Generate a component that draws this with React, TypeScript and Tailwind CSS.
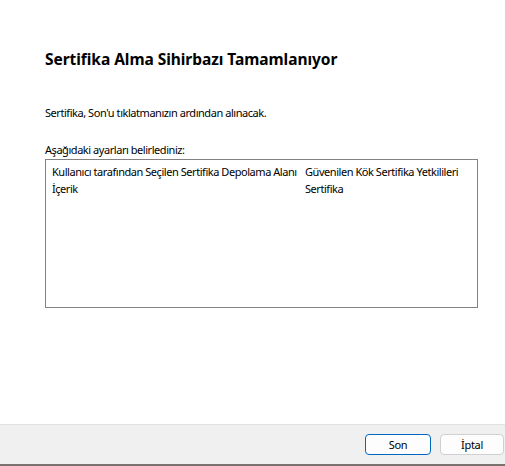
import React from "react";

export default function App() {
  const ui = { fontFamily: '"Noto Sans", "DejaVu Sans", sans-serif' };
  return (
    <div className="w-[505px] h-[466px] bg-white flex flex-col overflow-hidden text-black" style={ui}>
      <div className="flex-1 flex flex-col pl-[45px] pr-[27px]">
        <div className="mt-[47px] h-[24px] text-[15.5px] font-bold leading-[24px] tracking-[-0.05px]">
          Sertifika Alma Sihirbazı Tamamlanıyor
        </div>
        <div className="mt-[33px] h-[18px] text-[11px] leading-[18px] tracking-[-0.45px]">
          Sertifika, Son'u tıklatmanızın ardından alınacak.
        </div>
        <div className="mt-[19px] h-[18px] text-[11px] leading-[18px] tracking-[-0.45px]">
          Aşağıdaki ayarları belirlediniz:
        </div>
        <div className="mt-[0px] h-[149px] border border-[#828282] pl-[6px] pt-[3px] text-[11px] leading-[17px] tracking-[-0.45px]">
          <div className="grid grid-cols-[253px_1fr]">
            <div className="whitespace-nowrap">Kullanıcı tarafından Seçilen Sertifika Depolama Alanı</div>
            <div className="whitespace-nowrap">Güvenilen Kök Sertifika Yetkilileri</div>
            <div>İçerik</div>
            <div>Sertifika</div>
          </div>
        </div>
      </div>
      <div className="h-[40px] bg-[#f0f0f0] border-t border-[#e3e3e3] flex items-start justify-end gap-[9px] pt-[9px] pr-[1px]">
        <button className="w-[66px] h-[21px] rounded-[4px] border border-[#0067c0] bg-[#fdfdfd] text-[11px] leading-[19px] tracking-[-0.3px]">
          Son
        </button>
        <button className="w-[64px] h-[21px] rounded-[4px] border border-[#d0d0d0] bg-[#fdfdfd] text-[11px] leading-[19px] tracking-[-0.3px]">
          İptal
        </button>
      </div>
      <div className="h-[2px] bg-[#7a726e]" />
    </div>
  );
}
